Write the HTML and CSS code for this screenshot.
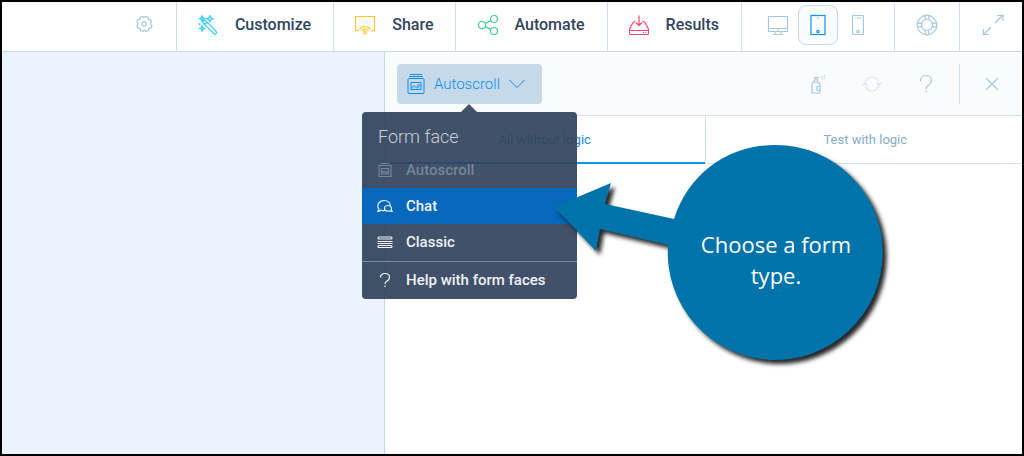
FILE: index.html
```html
<!DOCTYPE html>
<html lang="en">
<head>
<meta charset="utf-8">
<meta name="viewport" content="width=device-width, initial-scale=1">
<title>Form builder</title>
<link rel="stylesheet" href="styles.css">
</head>
<body>
<div class="app">
  <header class="toolbar">
    <div class="tool-group tool-group-start">
      <button class="icon-button" type="button" aria-label="Settings">
        <svg width="18" height="18" viewBox="0 0 18 18"><path d="M7 1.500h.8c.3 1.500 2.100 1.500 2.400 0h.8l2.200.9c-.7 1.500.6 2.500 2 2l1.300 2.300c-1.400.9-1.400 3.100.5 4l-1.100 2.500c-1.700-.5-3 .5-2.300 2.200l-2.400 1.100c-.7-1.500-2.700-1.500-3.400 0l-2.500-1.100c.7-1.700-.6-2.900-2.300-2.200l-1-2.500c1.500-.9 1.500-3 0-3.900l1-2.400c1.700.5 2.700-.7 2-2z"/><circle cx="9" cy="9" r="2.200"/></svg>
      </button>
    </div>
    <button class="nav-button customize" type="button">
      <svg width="20" height="20" viewBox="0 0 20 20"><path d="M5.300 8.200c-.8-.9-.5-2 .1-2.500.7-.6 1.800-.7 2.500.1l10 10.300c1 1.100.6 2.200 0 2.600-.7.6-1.600.5-2.400-.3zM6.600 9.500l2.600-2.300M4 1l.7 1.800L6.500 3.500l-1.800.7L4 6l-.7-1.800-1.800-.7 1.800-.7zM12 .8l.9 2 2 .9-2 .9-.9 2-.9-2-2-.9 2-.9zM4 11l.7 1.800 1.800.7-1.800.7L4 16l-.7-1.800-1.800-.7 1.800-.7zM1.500 8.200v2M.5 9.200h2"/></svg>
      Customize
    </button>
    <button class="nav-button share" type="button">
      <svg width="20" height="20" viewBox="0 0 20 20"><path d="M4 15.500H.5V1.500h19v14H16M4.500 14.500c2.800-4 8.200-4 11 0M6.500 16c2-2.500 5-2.500 7 0"/><circle cx="10" cy="17.500" r="1.300"/></svg>
      Share
    </button>
    <button class="nav-button automate" type="button">
      <svg width="22" height="20" viewBox="0 0 22 20"><circle cx="5" cy="10" r="3.700"/><circle cx="17" cy="4" r="3.500"/><circle cx="17" cy="16" r="3.500"/><path d="M8.400 8.400 13.800 5.600M8.400 11.600l5.400 2.800"/></svg>
      Automate
    </button>
    <button class="nav-button results" type="button">
      <svg width="20" height="20" viewBox="0 0 20 20"><path d="M6.500 6.500H5.200C3 7.500 2.500 11 .8 13.500c-.5 2-.5 5 .2 6h18c.7-1 .7-4 .2-6C17.500 11 17 7.500 14.800 6.500h-1.300M1 15.500h18M10 .5v10M6.800 7.500l3.200 3 3.200-3M14 17.500h1M16.500 17.500h1"/></svg>
      Results
    </button>
    <div class="tool-group devices">
      <button class="icon-button device" type="button" aria-label="Desktop">
        <svg width="22" height="22" viewBox="0 0 22 22"><path d="M1.500 2.500h19v15h-19zM1.500 14.500h19M10 16h2M8.500 17.500 8 19.500M13.500 17.500l.5 2M6 20.500h10"/></svg>
      </button>
      <button class="icon-button device device-active" type="button" aria-label="Tablet" aria-pressed="true">
        <svg width="16" height="22" viewBox="0 0 16 22"><rect x="1" y="1.500" width="14" height="19"/><circle cx="8" cy="17.500" r="1.200"/><path d="M7.500 4h1"/></svg>
      </button>
      <button class="icon-button device" type="button" aria-label="Phone">
        <svg width="12" height="22" viewBox="0 0 12 22"><rect x=".5" y="1.500" width="11" height="19" rx="1"/><circle cx="6" cy="17.500" r="1.200"/><path d="M3 4h.8M4.800 4H9"/></svg>
      </button>
    </div>
    <div class="tool-group tool-group-square">
      <button class="icon-button" type="button" aria-label="Support">
        <svg width="22" height="22" viewBox="0 0 22 22"><circle cx="11" cy="11" r="9.800"/><circle cx="11" cy="11" r="5.500"/><path d="M9.200 1.500v4.300M12.800 1.500v4.300M9.200 16.200v4.300M12.800 16.200v4.300M1.500 9.200h4.300M1.500 12.800h4.300M16.200 9.200h4.300M16.200 12.800h4.300"/></svg>
      </button>
    </div>
    <div class="tool-group tool-group-end">
      <button class="icon-button" type="button" aria-label="Full screen">
        <svg width="22" height="22" viewBox="0 0 22 22"><path d="M13 9 21 1M15 1.500h6V7M9 13l-8 8M1.500 15v5.500H7"/></svg>
      </button>
    </div>
  </header>

  <main class="workspace">
    <section class="canvas" aria-label="Form editor"></section>
    <section class="preview" aria-label="Preview">
      <div class="preview-bar">
        <div class="face-picker">
          <button class="face-button" type="button" aria-haspopup="menu" aria-expanded="true">
            <svg width="18" height="22" viewBox="0 0 18 22"><path d="M3 1.500h12M2 3.500h14M1.500 5.500h15l.5.500v14l-.5.500h-15L1 20V6zM4 9.500h10v7H4zM4.500 15.500 7 12.500l3 3M10 13.500l1.500 1.500"/><circle cx="11.500" cy="12.500" r="1"/></svg>
            Autoscroll
            <svg width="16" height="10" viewBox="0 0 16 10"><path d="M.5 1 8 8.500 15.500 1"/></svg>
          </button>
          <div class="face-menu" role="menu" aria-label="Form face">
            <h2 class="menu-title">Form face</h2>
            <button class="menu-item" type="button" role="menuitem" disabled>
              <svg width="16" height="16" viewBox="0 0 16 16"><path d="M3.500 1.500h9M2 3.500h12v11H2zM4.500 6.500h7v5.500h-7zM5 11l2-2 2 2 2-2"/></svg>
              Autoscroll
            </button>
            <button class="menu-item menu-item-active" type="button" role="menuitem">
              <svg width="16" height="16" viewBox="0 0 16 16"><path d="M7.500 12.500c-1.500.3-2.500.1-3.500-.3-1 .8-2 1.100-3.200 1.100.8-.8 1.200-1.600 1.100-2.500C-.6 7.500 1.800 2.500 7 2.500c4 0 6.500 2.500 6.300 5.300M10.800 7.500c-2 0-3.300 1.300-3.300 2.900s1.400 2.700 3.200 2.700c.7 0 1.300-.1 1.800-.4.8.5 1.600.7 2.700.6-.6-.7-.9-1.400-.9-2 .6-2-.9-3.800-3.500-3.800z"/></svg>
              Chat
            </button>
            <button class="menu-item" type="button" role="menuitem">
              <svg width="16" height="16" viewBox="0 0 16 16"><rect x="1" y="3" width="14" height="2" rx="1"/><path d="M.5 7.500h15M.5 9.500h15"/><rect x="1" y="11.500" width="14" height="2" rx="1"/></svg>
              Classic
            </button>
            <button class="menu-item menu-item-help" type="button" role="menuitem">
              <svg width="16" height="16" viewBox="0 0 16 16"><path d="M3.500 5.500C3.500 3 5.300 1.500 8 1.500s4.500 1.700 4.500 4-1.500 3-2.800 3.700S8 10.500 8 12M8 13.500V15"/></svg>
              Help with form faces
            </button>
          </div>
        </div>
        <div class="preview-actions">
          <button class="icon-button action" type="button" aria-label="Theme">
            <svg width="16" height="20" viewBox="0 0 16 20"><path d="M3.500 8h4.500l2 2v9H2v-9zM4.500 7.500V5h3v2.500M4 3.500h5M9.500 12.500h-2.500v4h2.500"/><path d="M10.500 3h1M12.500 2v3.500M14.500 1v5.500" stroke-dasharray="1.500 1" opacity=".6"/></svg>
          </button>
          <button class="icon-button action action-faded" type="button" aria-label="Reload">
            <svg width="20" height="18" viewBox="0 0 20 18"><path d="M3 9.500C3 5 6 2 10 2c3 0 5.500 1.500 6.500 4.500M17 8.500C17 13 14 16 10 16c-3 0-5.500-1.500-6.500-4.500M.5 10.500 3 8l2.500 2.500M14.500 7.500 17 10l2.500-2.500"/></svg>
          </button>
          <button class="icon-button action" type="button" aria-label="Help">
            <svg width="14" height="20" viewBox="0 0 14 20"><path d="M1.500 7.500C1.500 3.500 3.800 1.500 7 1.500s5.500 2 5.500 5-2 4-3.500 5-2 2-2 3.500M7 16.500v2"/></svg>
          </button>
        </div>
        <button class="icon-button close-button" type="button" aria-label="Close">
          <svg width="14" height="14" viewBox="0 0 14 14"><path d="m1 1 12 12M13 1 1 13"/></svg>
        </button>
      </div>
      <div class="tabs" role="tablist">
        <button class="tab tab-active" type="button" role="tab" aria-selected="true">All without logic</button>
        <button class="tab" type="button" role="tab" aria-selected="false">Test with logic</button>
      </div>
    </section>
  </main>

  <aside class="callout">
    <svg class="callout-shape" width="340" height="232" viewBox="550 140 340 232">
      <path d="M554 207 611 183 605 204 674 219C689 173 728 145 775 145A107.500 107.500 0 1 1 668 245L600 229 596 251Z"/>
    </svg>
    <p class="callout-text">Choose a form type.</p>
  </aside>
</div>
</body>
</html>
```
FILE: styles.css
```css
* {
  box-sizing: border-box;
}

body {
  margin: 0;
  font-family: Roboto, "Liberation Sans", sans-serif;
  color: #32445e;
  background: #fff;
}

button {
  margin: 0;
  padding: 0;
  border: 0;
  background: none;
  color: inherit;
  font: inherit;
  cursor: pointer;
}

svg {
  display: block;
  flex: none;
  fill: none;
  stroke: currentColor;
  stroke-width: 1.2;
}

.app {
  position: relative;
  display: flex;
  flex-direction: column;
  min-height: 100vh;
  border: 2px solid #000;
  overflow: hidden;
}

/* Top toolbar */
.toolbar {
  display: flex;
  height: 50px;
  border-bottom: 1px solid #c3d7e6;
}

.tool-group,
.nav-button {
  display: flex;
  align-items: center;
  border-left: 1px solid #d0dfeb;
}

.tool-group {
  color: #a5c6e2;
}

.tool-group-start {
  flex: 1;
  justify-content: flex-end;
  padding: 0 23px 6px 0;
  border-left: 0;
}

.tool-group-square,
.tool-group-end {
  justify-content: center;
  width: 65px;
  padding-bottom: 4px;
}

.tool-group-end {
  width: 63px;
  padding-left: 4px;
}

.icon-button {
  display: flex;
  align-items: center;
  justify-content: center;
}

.nav-button {
  gap: 17px;
  padding: 0 22px 4px 21px;
  font-size: 16px;
  font-weight: 500;
}

.automate {
  gap: 15px;
}

.customize svg { color: #2fcbff; }
.share svg { color: #ffc629; }
.automate svg { color: #46d190; }
.results svg { color: #f8476e; }

.devices {
  width: 153px;
  padding: 0 0 4px 16px;
}

.device {
  width: 40px;
  height: 40px;
  border: 1px solid transparent;
  border-radius: 8px;
}

.device-active {
  color: #0d94ee;
  border-color: #c3d9e8;
  background: #f9fbfd;
}

/* Workspace */
.workspace {
  flex: 1;
  display: flex;
}

.canvas {
  width: 37.45%;
  background: #ebf3fe;
}

.preview {
  flex: 1;
  min-width: 0;
  border-left: 1px solid #c0d8ea;
}

.preview-bar {
  display: flex;
  align-items: center;
  height: 64px;
  padding-left: 12px;
  border-bottom: 1px solid #d5e3ed;
  background: #f9fbfd;
}

.face-picker {
  position: relative;
}

.face-button {
  display: flex;
  align-items: center;
  gap: 9px;
  height: 40px;
  padding: 0 17px 0 10px;
  border-radius: 4px;
  background: #c6d9e8;
  color: #0b8cf2;
  font-size: 15px;
  font-weight: 300;
}

.face-button svg {
  stroke-width: 1;
}

.preview-actions {
  display: flex;
  flex: 1;
  justify-content: flex-end;
  gap: 14px;
  padding-right: 13px;
  color: #a5c6e2;
}

.action {
  width: 40px;
  height: 40px;
}

.action-faded {
  opacity: 0.4;
}

.close-button {
  width: 63px;
  height: 40px;
  padding-left: 2px;
  border-left: 1px solid #d0dfeb;
  color: #a5c6e2;
}

/* Tabs run under the window's right edge */
.tabs {
  display: flex;
  height: 48px;
  margin-right: -3px;
}

.tab {
  flex: 1 1 0;
  border-bottom: 1px solid #d0e1ed;
  color: #87a9c7;
  font-size: 13px;
}

.tab + .tab {
  border-left: 1px solid #d0e1ed;
}

.tab-active {
  border-bottom: 2px solid #0d94ee;
  color: #1b86e8;
}

/* Form face menu */
.face-menu {
  position: absolute;
  z-index: 1;
  top: 48px;
  left: -35px;
  width: 215px;
  border-radius: 4px;
  background: rgba(50, 68, 94, 0.93);
  color: #fff;
}

.face-menu::before {
  content: "";
  position: absolute;
  top: -8px;
  left: 99px;
  border: 8px solid transparent;
  border-top: 0;
  border-bottom-color: #42536b;
}

.menu-title {
  margin: 0;
  padding: 13px 16px 3px;
  color: #c9d0d9;
  font-size: 18px;
  font-weight: 300;
  line-height: 24px;
}

.menu-item {
  display: flex;
  align-items: center;
  gap: 13px;
  width: 100%;
  height: 36px;
  padding: 0 15px;
  color: #eef2f6;
  font-size: 15px;
  font-weight: 500;
  text-align: left;
}

.menu-item:disabled {
  color: #75859a;
}

.menu-item-active {
  background: #0568ba;
}

.menu-item-help {
  height: 38px;
  margin-top: 1px;
  border-top: 1px solid #7b899c;
}

/* Callout */
.callout {
  position: absolute;
  z-index: 2;
  top: 138px;
  left: 548px;
  width: 340px;
}

.callout-shape {
  overflow: visible;
  fill: #0073ab;
  stroke: none;
  filter: drop-shadow(4px 4px 2px rgba(0, 0, 0, 0.85));
}

.callout-text {
  position: absolute;
  top: 89px;
  left: 141px;
  width: 170px;
  margin: 0;
  color: #fff;
  font-family: "Open Sans", "Noto Sans", sans-serif;
  font-size: 22px;
  line-height: 31px;
  text-align: center;
}
```
